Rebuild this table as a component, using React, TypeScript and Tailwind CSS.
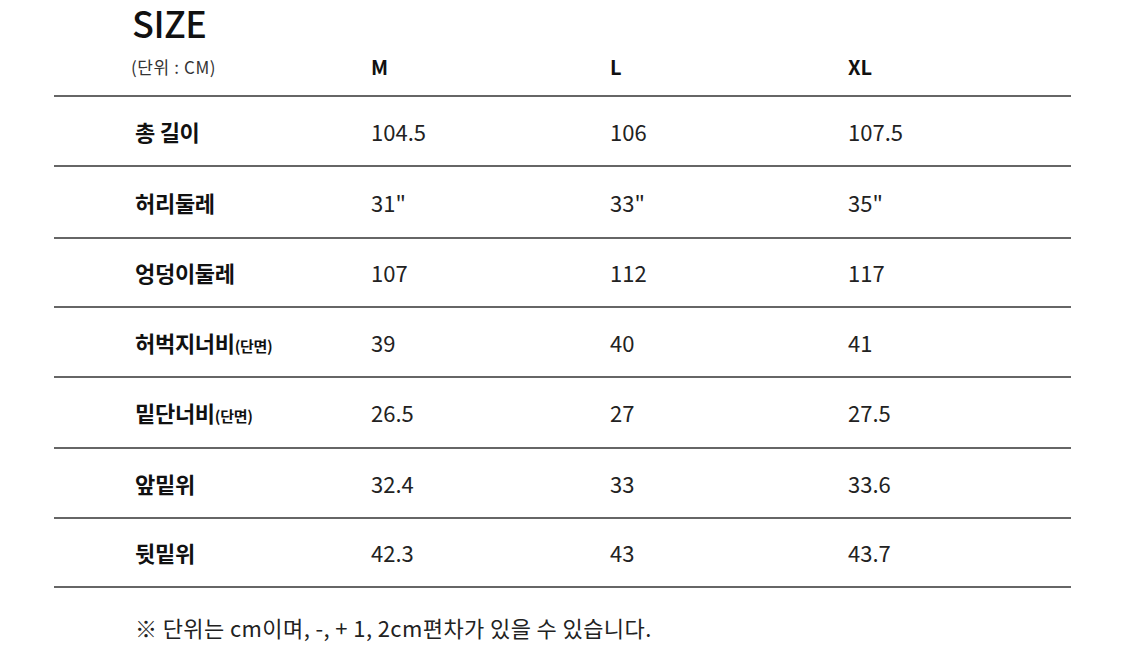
import React from "react";

interface Row {
  label: string;
  note?: string;
  values: string[];
  height: string;
}

const rows: Row[] = [
  { label: "총 길이", values: ["104.5", "106", "107.5"], height: "h-[70px]" },
  { label: "허리둘레", values: ['31"', '33"', '35"'], height: "h-[72px]" },
  { label: "엉덩이둘레", values: ["107", "112", "117"], height: "h-[69px]" },
  { label: "허벅지너비", note: "(단면)", values: ["39", "40", "41"], height: "h-[70px]" },
  { label: "밑단너비", note: "(단면)", values: ["26.5", "27", "27.5"], height: "h-[71px]" },
  { label: "앞밑위", values: ["32.4", "33", "33.6"], height: "h-[70px]" },
  { label: "뒷밑위", values: ["42.3", "43", "43.7"], height: "h-[69px]" },
];

const App: React.FC = () => {
  return (
    <div
      className="w-[1125px] h-[665px] bg-white text-[#222] overflow-hidden"
      style={{ fontFamily: '"Noto Sans CJK KR", "Noto Sans", sans-serif' }}
    >
      <div className="ml-[54px] w-[1017px]">
        <h1 className="pl-[78px] text-[36px] font-medium leading-[44px] tracking-[-0.5px] text-[#111]">
          SIZE
        </h1>

        {/* header */}
        <div className="flex h-[53px] items-center border-b-[2px] border-[#666] pb-[6px]">
          <div className="w-[317px] shrink-0 pl-[77px] text-[17px] tracking-[0.6px] text-[#333]">
            (단위 : CM)
          </div>
          <div className="w-[239px] shrink-0 text-[20px] font-bold text-[#111]">M</div>
          <div className="w-[238px] shrink-0 text-[20px] font-bold text-[#111]">L</div>
          <div className="flex-1 text-[20px] font-bold text-[#111]">XL</div>
        </div>

        {rows.map((row) => (
          <div
            key={row.label}
            className={`flex items-center border-b-[2px] border-[#666] ${row.height}`}
          >
            <div className="w-[317px] shrink-0 pl-[81px] text-[22px] font-bold tracking-[-0.3px] text-[#111]">
              {row.label}
              {row.note && <span className="text-[15px]">{row.note}</span>}
            </div>
            <div className="w-[239px] shrink-0 text-[22px] text-[#222]">{row.values[0]}</div>
            <div className="w-[238px] shrink-0 text-[22px] text-[#222]">{row.values[1]}</div>
            <div className="flex-1 text-[22px] text-[#222]">{row.values[2]}</div>
          </div>
        ))}

        <p className="pl-[81px] pt-[23px] text-[22px] tracking-[0.4px] text-[#222]">
          ※ 단위는 cm이며, -, + 1, 2cm편차가 있을 수 있습니다.
        </p>
      </div>
    </div>
  );
};

export default App;
